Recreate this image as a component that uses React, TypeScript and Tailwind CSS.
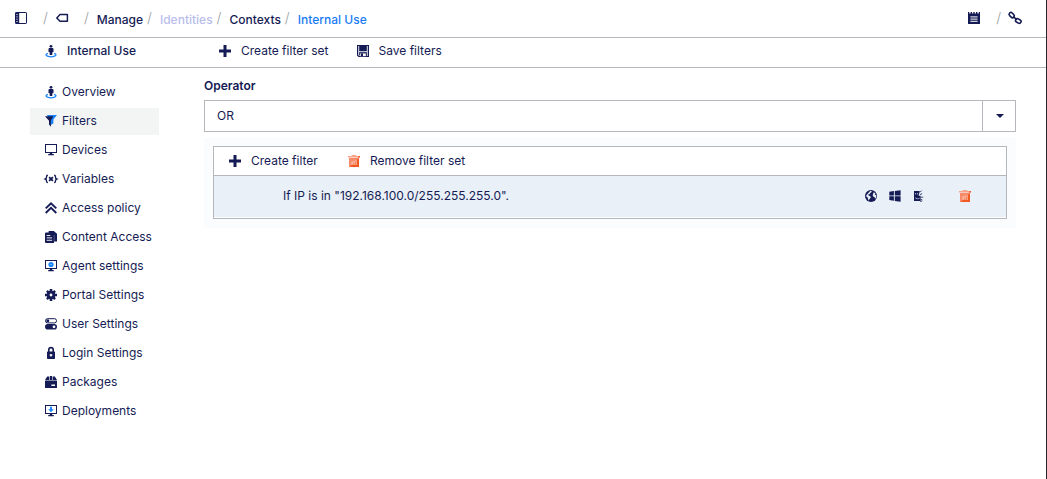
import { Fragment, useState } from 'react';
import type { ReactNode } from 'react';

const NAVY = '#151b54';
const BLUE = '#1a85ff';

interface SvgProps {
  children: ReactNode;
}

// All glyphs share a 12 unit grid
function Svg({ children }: SvgProps) {
  return (
    <svg
      viewBox="0 0 12 12"
      width={12}
      height={12}
      fill="currentColor"
      aria-hidden="true"
      className="shrink-0 overflow-visible"
    >
      {children}
    </svg>
  );
}

const PanelIcon = () => (
  <Svg>
    <rect x="0.5" y="0.5" width="11" height="11" rx="0.6" fill="none" stroke="currentColor" strokeWidth="1" />
    <rect x="0.5" y="0.5" width="3.7" height="11" />
    <path d="M1 2.6h2M1 4.9h2M1 7.2h2M1 9.5h2" stroke="#a9acc8" strokeWidth="0.9" />
  </Svg>
);

const TagIcon = () => (
  <Svg>
    <path d="M4 2.6h7.4v6.6H4L0.8 5.9z" fill="none" stroke="currentColor" strokeWidth="1.5" strokeLinejoin="round" />
  </Svg>
);

const NotepadIcon = () => (
  <Svg>
    <path d="M0 0h1.2v1.4h1.4V0h1.4v1.4h1.3V0h1.4v1.4H8V0h1.4v1.4h1.4V0H12v12H0z" />
    <path d="M2.4 4.9h7.2M2.4 7.1h7.2M2.4 9.3h7.2" stroke="#fff" strokeWidth="1" />
  </Svg>
);

const LinkIcon = () => (
  <Svg>
    <g fill="none" stroke="currentColor" strokeWidth="1.6">
      <rect x="-0.2" y="1.3" width="5.8" height="3.6" rx="1.8" transform="rotate(45 2.7 3.1)" />
      <rect x="6.4" y="7.2" width="5.8" height="3.6" rx="1.8" transform="rotate(30 9.3 9)" />
      <path d="M4.3 4.6l3.4 3" />
    </g>
  </Svg>
);

const PersonIcon = () => (
  <Svg>
    <path d="M3 8.3C0.4 9 0.4 10.4 2.4 11.1c2 .8 5.2.8 7.2 0 2-.7 2-2.1-.6-2.8" fill="none" stroke={BLUE} strokeWidth="1.2" />
    <circle cx="6" cy="1.3" r="1.4" />
    <path d="M4.2 3h3.6l.7.7v3.2h-1l-.3 3.2H4.8l-.3-3.2h-1V3.7z" />
  </Svg>
);

const FunnelIcon = () => (
  <Svg>
    <path d="M2 0h10L8.4 4.4v3.8L6 10z" fill={BLUE} />
    <path d="M0 1.2h8.4L5.9 5.4v6.4L4 9.6V5.8z" />
  </Svg>
);

function MonitorIcon({ children }: { children?: ReactNode }) {
  return (
    <Svg>
      <rect x="0.5" y="0.5" width="11" height="8" fill="none" stroke="currentColor" strokeWidth="1" />
      <path d="M4.8 8.5h2.4V10h1.6v1.2H3.2V10h1.6z" />
      {children}
    </Svg>
  );
}

const VariableIcon = () => (
  <Svg>
    <g fill="none" stroke="currentColor" strokeWidth="1.4">
      <path d="M2.9 2.3c-1.4 0-1.4.6-1.4 1.6S1.3 5.6.3 6c1 .4 1.2 1 1.2 2s0 1.6 1.4 1.6" />
      <path d="M9.1 2.3c1.4 0 1.4.6 1.4 1.6s.2 1.7 1.2 2.1c-1 .4-1.2 1-1.2 2s0 1.6-1.4 1.6" />
      <path d="M4.1 4.1l3.8 3.8M7.9 4.1L4.1 7.9" strokeWidth="1.8" />
    </g>
  </Svg>
);

const ChevronsIcon = () => (
  <Svg>
    <path d="M.7 6.4L6 1.3l5.3 5.1M.7 11L6 5.9l5.3 5.1" fill="none" stroke="currentColor" strokeWidth="1.9" />
  </Svg>
);

const DocumentsIcon = () => (
  <Svg>
    <path d="M3.6 0h5.2L12 2.8V10.4H3.6z" />
    <path d="M1 1.6h5.6L9 3.8V12H1a1 1 0 0 1-1-1V2.6a1 1 0 0 1 1-1z" />
    <path d="M9.2 4v6.4" stroke="#8a8eb3" strokeWidth="0.5" />
    <path d="M1.7 4.5h3.6M1.7 6.9h5.4M1.7 9.3h5.4" stroke="#fff" strokeWidth="0.9" />
  </Svg>
);

const GearIcon = () => (
  <Svg>
    <g stroke="currentColor" strokeWidth="2.6">
      <path d="M6 0v12M0 6h12" />
      <path d="M1.9 1.9l8.2 8.2M10.1 1.9l-8.2 8.2" strokeWidth="2.4" />
    </g>
    <circle cx="6" cy="6" r="4.3" />
    <circle cx="6" cy="6" r="1.4" fill="#fff" />
  </Svg>
);

const TogglesIcon = () => (
  <Svg>
    <rect x="0.5" y="0.7" width="11" height="4.2" rx="2" fill="none" stroke="currentColor" strokeWidth="1" />
    <circle cx="2.8" cy="2.8" r="1.5" />
    <rect x="0" y="6" width="12" height="5.6" rx="2.8" />
    <circle cx="9" cy="8.8" r="1.4" fill="#fff" />
  </Svg>
);

const LockIcon = () => (
  <Svg>
    <path d="M3.8 5V2.8a2.2 2.2 0 0 1 4.4 0V5" fill="none" stroke="currentColor" strokeWidth="1.6" />
    <rect x="2" y="4.4" width="8" height="7.6" rx="0.7" />
    <path d="M4.7 8.2h2.6M6 6.9v2.6" stroke="#fff" strokeWidth="1.3" />
  </Svg>
);

const PackageIcon = () => (
  <Svg>
    <path d="M2.2.5h2.2v3.4H0zM7.6.5h2.2L12 3.9H7.6zM5 0h2v3.9H5z" />
    <rect x="0" y="4.5" width="12" height="7.5" rx="0.5" />
    <rect x="6.4" y="8.5" width="3.6" height="1.5" fill="#fff" />
  </Svg>
);

const PlusIcon = () => (
  <Svg>
    <path d="M4.5 0h3v4.5H12v3H7.5V12h-3V7.5H0v-3h4.5z" />
  </Svg>
);

const SaveIcon = () => (
  <Svg>
    <path d="M0 0h12v12H1.6L0 10.4z" />
    <path d="M1.7 1v9l.9 1M10.3 1v10" stroke="#fff" strokeWidth="0.9" fill="none" />
    <path d="M2 6.7h8" stroke="#fff" strokeWidth="0.9" />
    <rect x="3.2" y="8.4" width="5.6" height="2.8" fill="#fff" />
    <rect x="4" y="8.4" width="2" height="2.8" />
  </Svg>
);

const TrashIcon = () => (
  <Svg>
    <path d="M1 3h10v9H1z" fill="#f78a68" />
    <path d="M11 3v9H1.6z" fill="#f25a24" />
    <path d="M3.8 0h4.4v1H3.8zM0 1h12v1.5H0z" fill="#f9a48a" />
    <path d="M10.8 1H12v1.5H9.4z" fill="#f25a24" />
    <path d="M4.1 10V6.4M6.1 10V5.8M8.1 10V5.2" stroke="#ffe0d5" strokeWidth="0.9" />
  </Svg>
);

const GlobeIcon = () => (
  <Svg>
    <circle cx="6" cy="6" r="6" />
    <path d="M5.2.9l1.6.2-.6 1.4-1.2.5-.4 1.2-1.4.4.2.9 1.4.4 1.1 1-.6 1.4-1 .9-.4 1.6-.9-1.9-.3-1.5-1.6-1.2.3-1zM8.6 2.4l1.2.3.8 1.2-1 .4.8.8 1 .2-.3 2.2-1 1.2-.6-1.7-1.4-.5-.4-1.5z" fill="#e9f0f7" />
  </Svg>
);

const WindowsIcon = () => (
  <Svg>
    <path d="M.3 1.8l4.6-.7v4.4H.3zM5.8 1L11.6.2v5.3H5.8zM.3 6.3h4.6v4.5l-4.6-.7zM5.8 6.3h5.8v5.4l-5.8-.8z" />
  </Svg>
);

const MacIcon = () => (
  <Svg>
    <path d="M1 1h5.8L5.6 5.8h2V11H1z" />
    <path d="M7 2.2L8.6.6M7 4.6l2.2-1M7.6 7.2h2.6M7.6 9l1.9 1.2M7 11.2h2" stroke="currentColor" strokeWidth="0.8" />
    <path d="M2.6 3v1.5M4.6 3v1.5M2.2 7.8c1.2 1 2.8 1.2 4.4.5" stroke="#e9f0f7" strokeWidth="0.7" fill="none" />
  </Svg>
);

const navItems = [
  { label: 'Overview', icon: <PersonIcon /> },
  { label: 'Filters', icon: <FunnelIcon /> },
  { label: 'Devices', icon: <MonitorIcon /> },
  { label: 'Variables', icon: <VariableIcon /> },
  { label: 'Access policy', icon: <ChevronsIcon /> },
  { label: 'Content Access', icon: <DocumentsIcon /> },
  {
    label: 'Agent settings',
    icon: (
      <MonitorIcon>
        <circle cx="6" cy="4.5" r="2.6" fill={BLUE} />
        <circle cx="6" cy="4.5" r="0.7" fill="#9fccff" />
      </MonitorIcon>
    )
  },
  { label: 'Portal Settings', icon: <GearIcon /> },
  { label: 'User Settings', icon: <TogglesIcon /> },
  { label: 'Login Settings', icon: <LockIcon /> },
  { label: 'Packages', icon: <PackageIcon /> },
  {
    label: 'Deployments',
    icon: (
      <MonitorIcon>
        <path d="M5 1.8h2v2.4h1.8L6 7.2 3.2 4.2H5z" fill={BLUE} />
      </MonitorIcon>
    )
  }
];

const crumbs = [
  { label: 'Manage', className: 'text-[#151b54]' },
  { label: 'Identities', className: 'text-[#b9bdec]' },
  { label: 'Contexts', className: 'text-[#151b54]' },
  { label: 'Internal Use', className: 'text-[#1a7cf5]' }
];

const Slash = () => <span className="text-sm font-light text-[#9a9fa5]">/</span>;

function ToolButton({ icon, children }: { icon: ReactNode; children: ReactNode }) {
  return (
    <button type="button" className="flex items-center gap-[10px] hover:opacity-80">
      {icon}
      {children}
    </button>
  );
}

function Header() {
  return (
    <header className="flex h-[38px] items-center justify-between border-b border-[#b4b8bc] pr-[25px] pb-[2px] pl-[15px]">
      <div className="flex items-center">
        <button type="button" aria-label="Toggle panel" className="mr-4">
          <PanelIcon />
        </button>
        <Slash />
        <button type="button" aria-label="Back" className="mr-4 ml-2">
          <TagIcon />
        </button>
        <nav aria-label="Breadcrumb" className="flex items-center gap-1">
          {crumbs.map(crumb => (
            <Fragment key={crumb.label}>
              <Slash />
              <a href="#" className={`ml-1 pt-1 font-medium ${crumb.className}`}>
                {crumb.label}
              </a>
            </Fragment>
          ))}
        </nav>
      </div>
      <div className="flex items-center">
        <button type="button" aria-label="Notes" className="mr-4">
          <NotepadIcon />
        </button>
        <Slash />
        <button type="button" aria-label="Copy link" className="ml-2">
          <LinkIcon />
        </button>
      </div>
    </header>
  );
}

function Sidebar() {
  return (
    <nav aria-label="Context" className="ml-[30px] flex w-[129px] shrink-0 flex-col gap-[2px] pt-[11px]">
      {navItems.map(item => (
        <a
          key={item.label}
          href="#"
          className={`flex h-[27px] items-center gap-[5px] pb-[2px] pl-[15px] whitespace-nowrap ${
            item.label === 'Filters' ? 'bg-[#f2f5f4]' : 'hover:bg-gray-50'
          }`}
        >
          {item.icon}
          {item.label}
        </a>
      ))}
    </nav>
  );
}

function FilterSet() {
  return (
    <section className="mt-[6px] bg-[#fbfcfe] px-[9px] pt-2 pb-[9px]">
      <div className="border border-[#b4b8bc] bg-white pb-px">
        <div className="flex h-[29px] items-center gap-[30px] border-b border-[#b4b8bc] pl-[15px]">
          <ToolButton icon={<PlusIcon />}>Create filter</ToolButton>
          <ToolButton icon={<TrashIcon />}>Remove filter set</ToolButton>
        </div>
        <div className="flex h-[41px] items-center bg-[#e9f0f7] pr-[35px] pb-[2px] pl-[69px]">
          <p className="flex-1">If IP is in "192.168.100.0/255.255.255.0".</p>
          <div className="mr-[34px] flex gap-3">
            <GlobeIcon />
            <WindowsIcon />
            <MacIcon />
          </div>
          <button type="button" aria-label="Remove filter">
            <TrashIcon />
          </button>
        </div>
      </div>
    </section>
  );
}

export default function App() {
  const [operator, setOperator] = useState('OR');

  return (
    <div className="min-h-screen border-r border-[#25272b] bg-white font-['Inter',sans-serif] text-xs text-[#151b54]">
      <Header />
      <div className="flex h-[30px] items-center border-b border-[#b4b8bc] pb-1">
        <div className="flex w-[219px] items-center gap-[10px] pl-[45px] font-medium">
          <PersonIcon />
          <h1>Internal Use</h1>
        </div>
        <div className="flex items-center gap-7">
          <ToolButton icon={<PlusIcon />}>Create filter set</ToolButton>
          <ToolButton icon={<SaveIcon />}>Save filters</ToolButton>
        </div>
      </div>
      <div className="flex">
        <Sidebar />
        <main className="mr-[30px] ml-[45px] min-w-0 flex-1 pt-[10px]">
          <label htmlFor="operator" className="block font-semibold">
            Operator
          </label>
          <div className="relative mt-[6px]">
            <select
              id="operator"
              value={operator}
              onChange={e => setOperator(e.target.value)}
              className="h-8 w-full appearance-none border border-[#b4b8bc] bg-white px-3"
            >
              <option>OR</option>
              <option>AND</option>
            </select>
            <div className="pointer-events-none absolute inset-y-0 right-0 flex w-[34px] items-center justify-center border-l border-[#b4b8bc]">
              <svg viewBox="0 0 8 4" width={8} height={4} aria-hidden="true">
                <path d="M0 0h8L4 4z" fill={NAVY} />
              </svg>
            </div>
          </div>
          <FilterSet />
        </main>
      </div>
    </div>
  );
}
